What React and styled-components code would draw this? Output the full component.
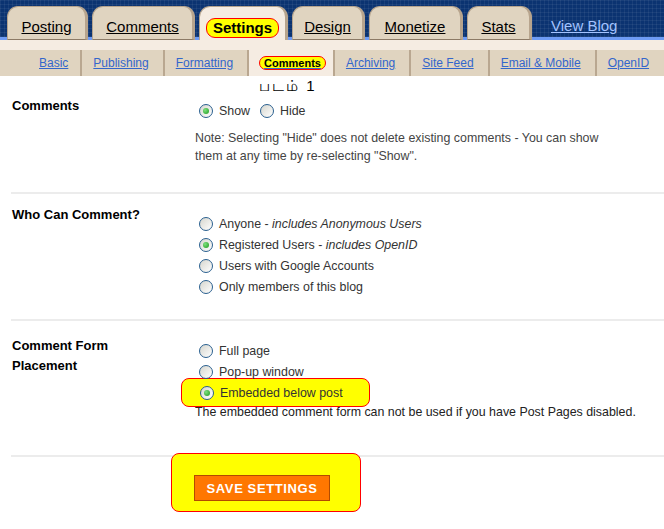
import styled, { createGlobalStyle } from 'styled-components'

const GlobalStyle = createGlobalStyle`
  body {
    margin: 0;
    background: #fff;
    font-family: "Liberation Sans", Arial, sans-serif;
  }
`

const Page = styled.div`
  width: 664px;
  overflow: hidden;
`

const Header = styled.div`
  height: 40px;
  display: flex;
  align-items: flex-end;
  padding-left: 7px;
  background-color: #0b3371;
  background-image:
    linear-gradient(rgba(255, 255, 255, 0.06) 1px, transparent 1px),
    linear-gradient(90deg, rgba(255, 255, 255, 0.06) 1px, transparent 1px);
  background-size: 4px 4px;
  box-shadow: inset 0 -3px 0 #6d9bf5;
`

const Tab = styled.a`
  box-sizing: border-box;
  height: 34px;
  width: ${p => p.$w}px;
  margin-right: 4px;
  padding-top: 11px;
  text-align: center;
  font-size: 15px;
  line-height: 18px;
  color: #000;
  text-decoration: underline;
  background: ${p => (p.$active ? '#f5ece2' : '#e0d4c0')};
  border: 1px solid #b7a48d;
  border-right-width: 3px;
  border-bottom: ${p => (p.$active ? 'none' : '1px solid #8c7a66')};
  border-radius: 11px 11px 0 0;
`

const Marked = styled.span`
  display: inline-block;
  background: #ffff00;
  border: 1px solid #ff0000;
  border-radius: 9px;
  font-weight: bold;
  text-decoration: none;
  color: #000;
  font-size: ${p => p.$size || 15}px;
  padding: ${p => p.$pad || '0 6px'};
`

const ViewBlog = styled.a`
  margin-left: 15px;
  margin-bottom: 5px;
  font-size: 15px;
  line-height: 18px;
  color: #a3c3ff;
  text-decoration: underline;
`

const Band = styled.div`
  height: 10px;
  background: #f5ece2;
`

const SubTabs = styled.div`
  height: 26px;
  display: flex;
  padding-left: 39px;
  background: #e0d4c0;
`

const SubTab = styled.a`
  display: flex;
  align-items: center;
  padding: ${p => (p.$active ? '0 7px 0 10px' : p.$first ? '0 12px 0 0' : '0 14px 0 11px')};
  border-left: ${p => (p.$first ? 'none' : '2px solid #b9a790')};
  font-size: 12px;
  color: #3366cc;
  text-decoration: underline;
  background: ${p => (p.$active ? '#f5ece2' : 'transparent')};
`

const Caption = styled.div`
  height: 17px;
  padding-left: 259px;
  font-size: 15px;
  letter-spacing: 2px;
  line-height: 20px;
  color: #000;
`

const Section = styled.div`
  display: grid;
  grid-template-columns: 184px 1fr;
  margin-left: 11px;
  padding-bottom: ${p => p.$bottom}px;
  border-bottom: 2px solid #ececec;
`

const Label = styled.div`
  padding: ${p => p.$top}px 0 0 1px;
  font-size: 13px;
  font-weight: bold;
  line-height: 20px;
  color: #000;
`

const Controls = styled.div`
  padding-top: ${p => p.$top}px;
  font-size: 12.4px;
  color: #333;
`

const RadioRow = styled.div`
  display: flex;
  align-items: center;
  height: 21px;
`

const Radio = styled.span`
  box-sizing: border-box;
  width: 14px;
  height: 14px;
  margin: 0 6px 0 4px;
  border-radius: 50%;
  border: 1px solid #2a5f8f;
  background: linear-gradient(135deg, #d6d6ce, #ffffff);
  display: inline-flex;
  align-items: center;
  justify-content: center;
  flex-shrink: 0;

  &::after {
    content: '';
    width: 6px;
    height: 6px;
    border-radius: 50%;
    background: ${p => (p.$on ? 'radial-gradient(circle at 35% 35%, #7ee07e, #1c9a1c)' : 'transparent')};
  }
`

const Gap = styled.span`
  width: 6px;
`

const Hint = styled.i`
  color: #333;
`

const Note = styled.p`
  margin: ${p => p.$top}px 0 0;
  max-width: ${p => p.$max || 460}px;
  font-size: 12.4px;
  line-height: 18px;
  color: ${p => p.$color || '#444'};
`

const Highlight = styled.div`
  display: flex;
  align-items: center;
  width: 189px;
  box-sizing: border-box;
  height: 29px;
  margin: -4px 0 -4px -14px;
  padding-left: 14px;
  background: #ffff00;
  border: 1px solid #ff0000;
  border-radius: 8px;
`

const SaveArea = styled.div`
  box-sizing: border-box;
  width: 190px;
  height: 59px;
  margin: -4px 0 0 171px;
  padding: 21px 0 0 22px;
  background: #ffff00;
  border: 1px solid #ff0000;
  border-radius: 8px;
  position: relative;
`

const SaveButton = styled.button`
  width: 136px;
  height: 26px;
  background: #ff7700;
  border: 1px solid #b24b00;
  color: #fff;
  font-family: "Liberation Sans", Arial, sans-serif;
  font-size: 13px;
  font-weight: bold;
  letter-spacing: 0.6px;
  padding: 0;
`

const tabs = [
  { name: 'Posting', w: 81 },
  { name: 'Comments', w: 103 },
  { name: 'Settings', w: 89, active: true },
  { name: 'Design', w: 73 },
  { name: 'Monetize', w: 94 },
  { name: 'Stats', w: 65 },
]

const subs = ['Basic', 'Publishing', 'Formatting', 'Comments', 'Archiving', 'Site Feed', 'Email & Mobile', 'OpenID']

export default function App() {
  return (
    <Page>
      <GlobalStyle />
      <Header>
        {tabs.map(t => (
          <Tab key={t.name} $w={t.w} $active={t.active}>
            {t.active ? <Marked>{t.name}</Marked> : t.name}
          </Tab>
        ))}
        <ViewBlog>View Blog</ViewBlog>
      </Header>
      <Band />
      <SubTabs>
        {subs.map((s, i) => (
          <SubTab key={s} $first={i === 0} $active={s === 'Comments'}>
            {s === 'Comments' ? <Marked $size={11} $pad="0 4px">{s}</Marked> : s}
          </SubTab>
        ))}
      </SubTabs>
      <Caption>படம் 1</Caption>

      <Section $bottom={27}>
        <Label $top={3}>Comments</Label>
        <Controls $top={7}>
          <RadioRow>
            <Radio $on />Show<Gap /><Radio />Hide
          </RadioRow>
          <Note $top={8} $max={420}>
            Note: Selecting "Hide" does not delete existing comments - You can show
            them at any time by re-selecting "Show".
          </Note>
        </Controls>
      </Section>

      <Section $bottom={22}>
        <Label $top={11}>Who Can Comment?</Label>
        <Controls $top={19}>
          <RadioRow><Radio />Anyone -&nbsp;<Hint>includes Anonymous Users</Hint></RadioRow>
          <RadioRow><Radio $on />Registered Users -&nbsp;<Hint>includes OpenID</Hint></RadioRow>
          <RadioRow><Radio />Users with Google Accounts</RadioRow>
          <RadioRow><Radio />Only members of this blog</RadioRow>
        </Controls>
      </Section>

      <Section $bottom={34}>
        <Label $top={15}>Comment Form<br />Placement</Label>
        <Controls $top={19}>
          <RadioRow><Radio />Full page</RadioRow>
          <RadioRow><Radio />Pop-up window</RadioRow>
          <Highlight><Radio $on />Embedded below post</Highlight>
          <Note $top={-1} $color="#222">
            The embedded comment form can not be used if you have Post Pages disabled.
          </Note>
        </Controls>
      </Section>

      <SaveArea>
        <SaveButton>SAVE SETTINGS</SaveButton>
      </SaveArea>
    </Page>
  )
}
